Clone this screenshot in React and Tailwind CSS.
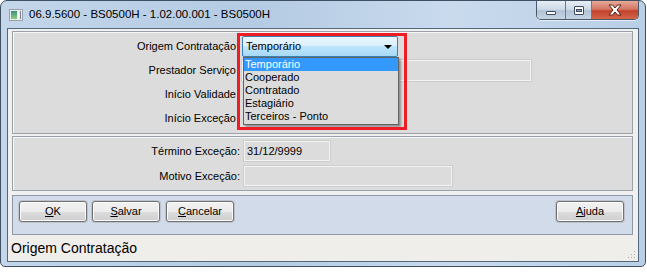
import React from 'react';

const font = { fontFamily: '"Liberation Sans", Arial, sans-serif' };

const opcoes = ['Temporário', 'Cooperado', 'Contratado', 'Estagiário', 'Terceiros - Ponto'];

const WinButton = ({ mnemonic, rest }) => (
  <button className="w-[68px] h-[21px] rounded-[3px] border border-[#707070] shadow-[0_0_0_1px_#bcc3cc,inset_0_0_0_1px_#fbfbfb] bg-[linear-gradient(#f2f2f2_0%,#ebebeb_50%,#dddddd_50%,#cfcfcf_100%)] text-[11px] text-black leading-none flex items-center justify-center">
    <span>
      <span className="underline underline-offset-[1px]">{mnemonic}</span>
      {rest}
    </span>
  </button>
);

const TitleIcon = () => (
  <svg width="14" height="12" viewBox="0 0 14 12">
    <rect x="0.5" y="0.5" width="13" height="11" fill="#e8eaec" stroke="#9aa3ad" />
    <defs>
      <linearGradient id="ti" x1="0" y1="0" x2="0" y2="1">
        <stop offset="0" stopColor="#3e8f86" />
        <stop offset="1" stopColor="#8ccf7a" />
      </linearGradient>
    </defs>
    <rect x="2" y="2" width="6" height="8" fill="url(#ti)" />
    <rect x="9" y="2" width="1" height="8" fill="#ffffff" />
    <rect x="11" y="2" width="1" height="8" fill="#7c8692" />
  </svg>
);

const WindowControls = () => (
  <div className="absolute top-0 right-[6px] flex h-[19px] rounded-b-[5px] border border-t-0 border-[#4b5a6b] overflow-hidden shadow-[0_1px_0_rgba(255,255,255,0.6)]">
    <div className="w-[29px] h-full bg-[linear-gradient(#e6edf5_0%,#cfdbe8_45%,#b2c3d6_55%,#c6d5e5_100%)] border-r border-[#6a7b8e] flex items-end justify-center pb-[4px]">
      <div className="w-[10px] h-[4px] bg-white border border-[#3c4c5e] rounded-[1px]" />
    </div>
    <div className="w-[26px] h-full bg-[linear-gradient(#e6edf5_0%,#cfdbe8_45%,#b2c3d6_55%,#c6d5e5_100%)] border-r border-[#6a7b8e] flex items-center justify-center">
      <div className="w-[10px] h-[9px] bg-white border border-[#3c4c5e] rounded-[1px] flex items-center justify-center">
        <div className="w-[6px] h-[3px] mt-[1px] bg-[#8fa3b9] border border-[#3c4c5e]" />
      </div>
    </div>
    <div className="w-[46px] h-full bg-[linear-gradient(#e9a99a_0%,#d47763_45%,#c2432b_55%,#d4654a_100%)] flex items-center justify-center">
      <svg width="16" height="12" viewBox="0 0 16 12">
        <path d="M2 1 L5.5 1 L8 4 L10.5 1 L14 1 L10 6 L14 11 L10.5 11 L8 8 L5.5 11 L2 11 L6 6 Z" fill="#ffffff" stroke="#5a2016" strokeWidth="1" strokeLinejoin="round" />
      </svg>
    </div>
  </div>
);

export default function App() {
  return (
    <div className="w-[647px] h-[272px] bg-white" style={font}>
      <div className="relative w-[646px] h-[267px] rounded-t-[7px] rounded-b-[5px] border border-[#3f5063] bg-[linear-gradient(90deg,#c3d6ea_0%,#b4cbe3_40%,#c9daed_70%,#b9cfe6_100%)] flex flex-col">
        {/* Title bar */}
        <div className="h-[27px] flex items-center pl-[8px] gap-[6px] shrink-0">
          <TitleIcon />
          <span className="text-[11.5px] text-black mt-[1px]">06.9.5600 - BS0500H - 1.02.00.001 - BS0500H</span>
        </div>
        <WindowControls />

        {/* Client area */}
        <div className="mx-[6px] h-[234px] border border-[#55677b] bg-[#f0f0f0] flex flex-col">
          <div className="ml-[4px] mr-[5px] mt-[2px] flex flex-col gap-[2px]">
            {/* Top panel */}
            <div className="relative h-[103px] border border-[#9aa1a9] shadow-[inset_1px_1px_0_#f7f7f7] bg-[#dcdcdc] pt-[4px] flex flex-col gap-[3px] text-[11px] text-black">
              <div className="flex items-center h-[21px]">
                <div className="w-[223px] text-right">Origem Contratação</div>
                <div className="relative ml-[6px]">
                  <div className="w-[156px] h-[21px] rounded-[2px] border border-[#3c7fb1] bg-[linear-gradient(#eaf6fd_0%,#d9f0fc_50%,#bee6fd_50%,#a7d9f5_100%)] flex items-center justify-between pl-[3px] pr-[5px]">
                    <span>Temporário</span>
                    <svg width="8" height="4" viewBox="0 0 8 4">
                      <path d="M0 0 H8 L4 4 Z" fill="#000" />
                    </svg>
                  </div>
                  <div className="absolute z-10 left-[1px] top-[21px] w-[156px] h-[68px] bg-[#dcdcdc] border border-[#646464] shadow-[2px_2px_2px_rgba(0,0,0,0.35)] flex flex-col pt-[0px]">
                    {opcoes.map((o, i) => (
                      <div
                        key={o}
                        className={
                          i === 0
                            ? 'h-[13px] leading-[13px] pl-[1px] bg-[#3399ff] text-white'
                            : 'h-[13px] leading-[13px] pl-[1px] text-black'
                        }
                      >
                        {o}
                      </div>
                    ))}
                  </div>
                </div>
              </div>
              <div className="flex items-center h-[21px]">
                <div className="w-[223px] text-right">Prestador Serviço</div>
                <div className="ml-[6px] w-[289px] h-[21px] border border-[#f3f3f3] shadow-[0_0_0_1px_#cdcdcd] bg-[#dcdcdc]" />
              </div>
              <div className="flex items-center h-[21px]">
                <div className="w-[223px] text-right">Início Validade</div>
              </div>
              <div className="flex items-center h-[21px]">
                <div className="w-[223px] text-right">Início Exceção</div>
              </div>
              {/* highlight frame */}
              <div className="absolute left-[224px] top-[1px] w-[170px] h-[97px] border-[3px] border-[#ee1c24] z-20 pointer-events-none" />
            </div>

            {/* Second panel */}
            <div className="h-[55px] border border-[#9aa1a9] shadow-[inset_1px_1px_0_#f7f7f7] bg-[#dcdcdc] pt-[4px] flex flex-col gap-[5px] text-[11px] text-black">
              <div className="flex items-center h-[20px]">
                <div className="w-[227px] text-right">Término Exceção:</div>
                <div className="ml-[4px] w-[86px] h-[20px] border border-[#f3f3f3] shadow-[0_0_0_1px_#cdcdcd] bg-[#dcdcdc] flex items-center pl-[2px]">
                  31/12/9999
                </div>
              </div>
              <div className="flex items-center h-[20px]">
                <div className="w-[227px] text-right">Motivo Exceção:</div>
                <div className="ml-[4px] w-[208px] h-[20px] border border-[#f3f3f3] shadow-[0_0_0_1px_#cdcdcd] bg-[#dcdcdc]" />
              </div>
            </div>
          </div>

          {/* Buttons panel */}
          <div className="ml-[4px] mr-[5px] mt-[4px] h-[40px] border border-[#8e99a6] bg-[#d1dbe9] flex items-start justify-between pt-[5px] pl-[6px] pr-[8px]">
            <div className="flex gap-[5px]">
              <WinButton mnemonic="O" rest="K" />
              <WinButton mnemonic="S" rest="alvar" />
              <div className="ml-[1px]">
                <WinButton mnemonic="C" rest="ancelar" />
              </div>
            </div>
            <WinButton mnemonic="A" rest="juda" />
          </div>

          {/* Status bar */}
          <div className="relative flex-1 bg-[#f0eeeb] flex items-center pl-[3px] text-[14px] text-black">
            Origem Contratação
            <svg className="absolute right-[2px] bottom-[2px]" width="10" height="10" viewBox="0 0 10 10">
              <rect x="8" y="2" width="1" height="1" fill="#a8a8a8" />
              <rect x="5" y="5" width="1" height="1" fill="#a8a8a8" />
              <rect x="8" y="5" width="1" height="1" fill="#a8a8a8" />
              <rect x="2" y="8" width="1" height="1" fill="#a8a8a8" />
              <rect x="5" y="8" width="1" height="1" fill="#a8a8a8" />
              <rect x="8" y="8" width="1" height="1" fill="#a8a8a8" />
            </svg>
          </div>
        </div>
      </div>
    </div>
  );
}
